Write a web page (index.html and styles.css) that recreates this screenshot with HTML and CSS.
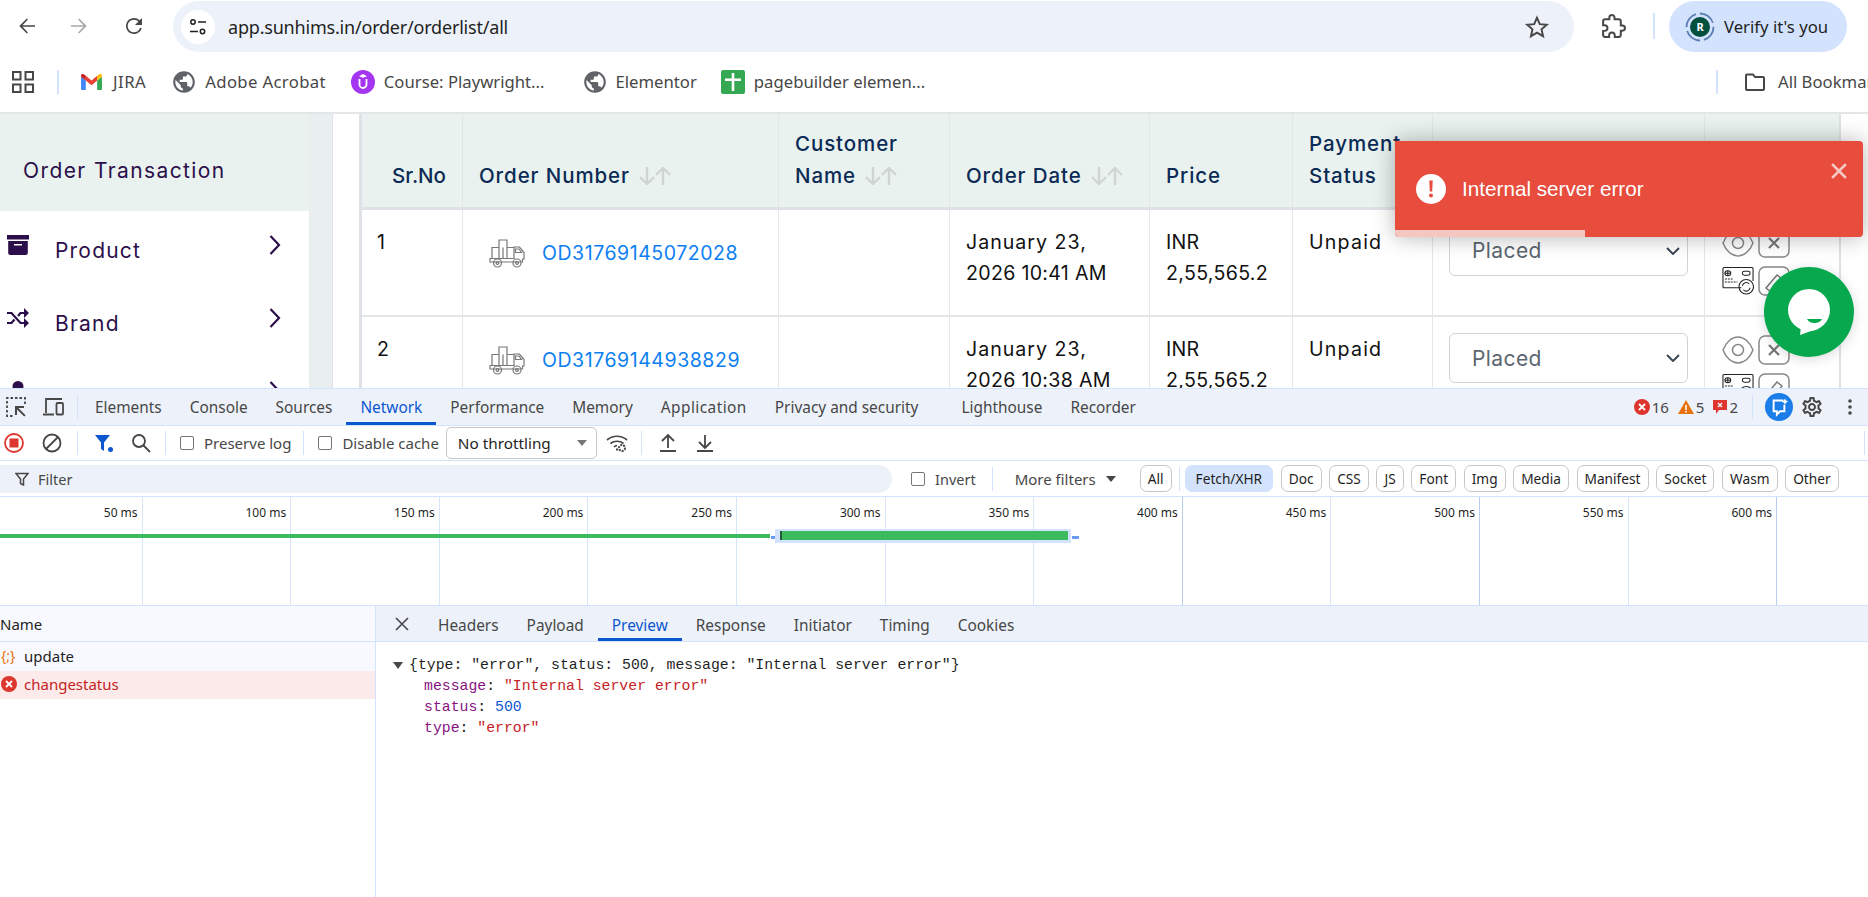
FILE: index.html
```html
<!DOCTYPE html>
<html lang="en">

<head>
    <meta charset="UTF-8">
    <meta name="viewport" content="width=device-width, initial-scale=1">
    <title>Order list</title>
    <link rel="stylesheet" href="styles.css">
</head>

<body>

    <div class="toolbar">
        <svg class="tb-icon back" viewBox="0 0 24 24"><path fill="#474747" d="M20 11.2H7.5l5.4-5.6L11.8 4.500l-7.500 7.500 7.500 7.500 1.100-1.100-5.400-5.600H20z"/></svg>
        <svg class="tb-icon forward" viewBox="0 0 24 24"><path fill="#a8a8a8" d="M4 11.2h12.500l-5.400-5.600 1.100-1.100 7.500 7.500-7.500 7.500-1.100-1.100 5.400-5.600H4z"/></svg>
        <svg class="tb-icon reload" viewBox="0 0 24 24"><path fill="#474747" d="M17.650 6.350A7.958 7.958 0 0 0 12 4c-4.420 0-7.990 3.580-7.990 8s3.570 8 7.990 8c3.730 0 6.840-2.550 7.730-6h-1.800A6.300 6.300 0 0 1 12 18.300c-3.480 0-6.300-2.820-6.300-6.300S8.520 5.700 12 5.700c1.740 0 3.300.72 4.430 1.870L13 11h7V4z"/></svg>
        <div class="omnibox">
            <span class="site-info">
                <svg viewBox="0 0 20 20" width="20" height="20"><g fill="none" stroke="#1f1f1f" stroke-width="1.500"><circle cx="5" cy="5" r="2.200"/><path d="M10 5h8M2 14.500h8"/><circle cx="14.500" cy="14.500" r="2.200"/></g></svg>
            </span>
            <span class="url">app.sunhims.in/order/orderlist/all</span>
            <svg class="star" viewBox="0 0 24 24"><path fill="none" stroke="#474747" stroke-width="1.800" d="M12 3.500l2.600 5.900 6.400.6-4.800 4.200 1.400 6.300L12 17.200l-5.600 3.300 1.400-6.300L3 10l6.400-.6z"/></svg>
        </div>
        <svg class="tb-icon puzzle" viewBox="0 0 24 24"><path fill="none" stroke="#474747" stroke-width="1.900" d="M20.500 11H19V7c0-1.100-.9-2-2-2h-4V3.500C13 2.120 11.880 1 10.500 1S8 2.120 8 3.500V5H4c-1.100 0-1.990.9-1.990 2v3.800H3.500c1.490 0 2.700 1.210 2.700 2.700s-1.210 2.700-2.700 2.700H2V20c0 1.100.9 2 2 2h3.800v-1.500c0-1.490 1.210-2.700 2.700-2.700 1.490 0 2.700 1.210 2.700 2.700V22H17c1.100 0 2-.9 2-2v-4h1.500c1.380 0 2.500-1.120 2.500-2.500S21.880 11 20.500 11z"/></svg>
        <span class="tb-sep"></span>
        <div class="profile-pill">
            <svg class="avatar" viewBox="0 0 30 30" width="30" height="30">
                <circle cx="15" cy="15" r="13.500" fill="none" stroke="#5b7db1" stroke-width="1.800" stroke-dasharray="17 4"/>
                <circle cx="15" cy="15" r="10" fill="#04503f"/>
                <text x="15" y="19" text-anchor="middle" class="avatar-letter">R</text>
            </svg>
            <span>Verify it's you</span>
        </div>
    </div>

    <div class="bookmarks">
        <svg class="apps" viewBox="0 0 22 22" width="22" height="22"><g fill="none" stroke="#474747" stroke-width="2"><rect x="1" y="1" width="7.500" height="7.500"/><rect x="13.500" y="1" width="7.500" height="7.500"/><rect x="1" y="13.500" width="7.500" height="7.500"/><rect x="13.500" y="13.500" width="7.500" height="7.500"/></g></svg>
        <span class="bm-sep"></span>
        <div class="bm bm-jira">
            <svg viewBox="0 0 24 20" width="23" height="19"><path fill="#4285f4" d="M1 5v13a1 1 0 0 0 1 1h4V9z"/><path fill="#34a853" d="M18 9v10h4a1 1 0 0 0 1-1V5z"/><path fill="#ea4335" d="M6 9v-5L12 9l6-5v5l-6 5z"/><path fill="#c5221f" d="M1 3.500V5l5 4V4L4.500 2.800C3 1.600 1 2.500 1 3.500z"/><path fill="#fbbc04" d="M23 3.500V5l-5 4V4l1.500-1.200C21 1.600 23 2.500 23 3.500z"/></svg>
            <span>JIRA</span>
        </div>
        <div class="bm bm-adobe">
            <svg viewBox="0 0 24 24" width="26" height="26"><path fill="#5f6368" d="M12 2C6.480 2 2 6.480 2 12s4.480 10 10 10 10-4.480 10-10S17.520 2 12 2zm-1 17.930c-3.950-.49-7-3.850-7-7.930 0-.62.08-1.210.21-1.790L9 15v1c0 1.100.9 2 2 2v1.930zm6.900-2.540c-.26-.81-1-1.390-1.900-1.390h-1v-3c0-.55-.45-1-1-1H8v-2h2c.55 0 1-.45 1-1V7h2c1.100 0 2-.9 2-2v-.41c2.930 1.190 5 4.060 5 7.410 0 2.080-.8 3.970-2.100 5.390z"/></svg>
            <span>Adobe Acrobat</span>
        </div>
        <div class="bm bm-course">
            <svg viewBox="0 0 24 24" width="24" height="24"><circle cx="12" cy="12" r="12" fill="#a435f0"/><path fill="none" stroke="#fff" stroke-width="1.800" d="M8.500 9v5.500a3.500 3.500 0 0 0 7 0V9"/><path fill="#fff" d="M12 4l4 2.200-4 1.600-4-1.600z"/></svg>
            <span>Course: Playwright...</span>
        </div>
        <div class="bm bm-elementor">
            <svg viewBox="0 0 24 24" width="26" height="26"><path fill="#5f6368" d="M12 2C6.480 2 2 6.480 2 12s4.480 10 10 10 10-4.480 10-10S17.520 2 12 2zm-1 17.930c-3.950-.49-7-3.850-7-7.930 0-.62.08-1.210.21-1.790L9 15v1c0 1.100.9 2 2 2v1.930zm6.900-2.540c-.26-.81-1-1.390-1.900-1.390h-1v-3c0-.55-.45-1-1-1H8v-2h2c.55 0 1-.45 1-1V7h2c1.100 0 2-.9 2-2v-.41c2.930 1.190 5 4.060 5 7.410 0 2.080-.8 3.970-2.100 5.390z"/></svg>
            <span>Elementor</span>
        </div>
        <div class="bm bm-page">
            <svg viewBox="0 0 24 24" width="24" height="24"><rect width="24" height="24" rx="2" fill="#34a853"/><path fill="#fff" d="M10.700 3h2.600v5.500H20V11h-6.700v10h-2.600V11H4V8.500h6.700z"/></svg>
            <span>pagebuilder elemen...</span>
        </div>
        <div class="bm-all">
            <span class="bm-sep"></span>
            <svg viewBox="0 0 24 24" width="26" height="24"><path fill="none" stroke="#474747" stroke-width="2" d="M3 5.500a1 1 0 0 1 1-1h6l2 2.500h8a1 1 0 0 1 1 1V19a1 1 0 0 1-1 1H4a1 1 0 0 1-1-1z"/></svg>
            <span>All Bookmarks</span>
        </div>
    </div>

    <div class="page">
        <aside class="sidebar">
            <div class="side-head">Order Transaction</div>
            <div class="side-item">
                <svg class="side-icon" viewBox="0 0 22 20"><path fill="#2c0f4a" d="M0 0h22v4.500H0zM1.200 6h19.600v12a2 2 0 0 1-2 2H3.200a2 2 0 0 1-2-2zM7 9v1.600h8V9z" fill-rule="evenodd"/></svg>
                <span class="side-label">Product</span>
                <svg class="side-chev" viewBox="0 0 12 20"><path fill="none" stroke="#2c0f4a" stroke-width="2.200" d="M1.500 1l8.500 9-8.500 9"/></svg>
            </div>
            <div class="side-item">
                <svg class="side-icon" viewBox="0 0 22 20"><g fill="none" stroke="#2c0f4a" stroke-width="2.200"><path d="M0 5h4.500l9 10H18"/><path d="M0 15h4.500l3-3.500M11 8l2.500-3H18"/></g><path fill="#2c0f4a" d="M17 0l5 5-5 5zM17 10l5 5-5 5z"/></svg>
                <span class="side-label">Brand</span>
                <svg class="side-chev" viewBox="0 0 12 20"><path fill="none" stroke="#2c0f4a" stroke-width="2.200" d="M1.500 1l8.500 9-8.500 9"/></svg>
            </div>
            <div class="side-item">
                <svg class="side-icon" viewBox="0 0 22 20"><circle cx="11" cy="5.500" r="5.500" fill="#2c0f4a"/></svg>
                <span class="side-label"></span>
                <svg class="side-chev" viewBox="0 0 12 20"><path fill="none" stroke="#2c0f4a" stroke-width="2.200" d="M1.500 1l8.500 9-8.500 9"/></svg>
            </div>
        </aside>
        <div class="side-gutter"></div>

        <table class="orders">
            <colgroup>
                <col class="c-sr"><col class="c-num"><col class="c-cust"><col class="c-date"><col class="c-price"><col class="c-pay"><col class="c-status"><col class="c-act">
            </colgroup>
            <thead>
                <tr>
                    <th class="th-sr">Sr.No</th>
                    <th>Order Number <svg class="sort" viewBox="0 0 32 18"><path d="M8 0v16M1 10l7 7 7-7"/><path d="M24 18V2M17 8l7-7 7 7"/></svg></th>
                    <th>Customer<br>Name <svg class="sort" viewBox="0 0 32 18"><path d="M8 0v16M1 10l7 7 7-7"/><path d="M24 18V2M17 8l7-7 7 7"/></svg></th>
                    <th>Order Date <svg class="sort" viewBox="0 0 32 18"><path d="M8 0v16M1 10l7 7 7-7"/><path d="M24 18V2M17 8l7-7 7 7"/></svg></th>
                    <th>Price</th>
                    <th>Payment<br>Status</th>
                    <th></th>
                    <th></th>
                </tr>
            </thead>
            <tbody>
                <tr class="row-one">
                    <td>1</td>
                    <td>
                        <div class="order-no">
                            <svg class="truck" viewBox="0 0 36 29"><g fill="none" stroke="#777" stroke-width="1.200"><path d="M1 19.500h24V8h5.500l4.500 5.500v6.500h-1.500v3H1z"/><path d="M3 19.500V8.500h7V1h8v7.500h7M10 8.500v11M18 8.500v11M14 8.500v11"/><path d="M26.500 10h3.500l2.500 3.500h-6z"/><circle cx="8.500" cy="24" r="4"/><circle cx="8.500" cy="24" r="1.400"/><circle cx="28" cy="24" r="4"/><circle cx="28" cy="24" r="1.400"/></g></svg>
                            <a class="order-link">OD31769145072028</a>
                        </div>
                    </td>
                    <td></td>
                    <td><span class="date-top">January 23,</span><br>2026 10:41 AM</td>
                    <td>INR<br>2,55,565.2</td>
                    <td class="unpaid">Unpaid</td>
                    <td>
                        <div class="status-select"><span>Placed</span><svg viewBox="0 0 14 8" width="14" height="8"><path fill="none" stroke="#3f4a57" stroke-width="2" d="M1 1l6 6 6-6"/></svg></div>
                    </td>
                    <td>
                        <div class="actions">
                            <svg class="act" viewBox="0 0 32 30"><g fill="none" stroke="#888" stroke-width="1.500"><path d="M1 15C4 7 10 2 16 2s12 5 15 13c-3 8-9 13-15 13S4 23 1 15z"/><circle cx="16" cy="15" r="5.500"/></g></svg>
                            <svg class="act" viewBox="0 0 32 30"><rect x="1" y="1" width="30" height="28" rx="6" fill="none" stroke="#888" stroke-width="1.500"/><path fill="none" stroke="#777" stroke-width="2.200" d="M11 10l10 10M21 10L11 20"/></svg>
                            <svg class="act" viewBox="0 0 33 30"><g fill="none" stroke="#222" stroke-width="1.100"><path d="M20 22H2a1 1 0 0 1-1-1V2a1 1 0 0 1 1-1h29a1 1 0 0 1 1 1v13"/><ellipse cx="6" cy="7" rx="3" ry="2.500"/><path d="M6 4.500v5M3 7h6"/><rect x="21" y="5" width="8" height="4" rx="2"/><path d="M3 13h9M3 16h13" stroke-dasharray="2 1"/><circle cx="25" cy="21" r="7.500"/><path d="M21 20a4 4 0 0 1 7-2M29 22a4 4 0 0 1-7 2"/></g></svg>
                            <svg class="act" viewBox="0 0 32 30"><rect x="1" y="1" width="30" height="28" rx="6" fill="none" stroke="#888" stroke-width="1.500"/><path fill="none" stroke="#777" stroke-width="1.500" d="M8 22l11-13 5 4-11 13z"/></svg>
                        </div>
                    </td>
                </tr>
                <tr class="row-two">
                    <td>2</td>
                    <td>
                        <div class="order-no">
                            <svg class="truck" viewBox="0 0 36 29"><g fill="none" stroke="#777" stroke-width="1.200"><path d="M1 19.500h24V8h5.500l4.500 5.500v6.500h-1.500v3H1z"/><path d="M3 19.500V8.500h7V1h8v7.500h7M10 8.500v11M18 8.500v11M14 8.500v11"/><path d="M26.500 10h3.500l2.500 3.500h-6z"/><circle cx="8.500" cy="24" r="4"/><circle cx="8.500" cy="24" r="1.400"/><circle cx="28" cy="24" r="4"/><circle cx="28" cy="24" r="1.400"/></g></svg>
                            <a class="order-link">OD31769144938829</a>
                        </div>
                    </td>
                    <td></td>
                    <td><span class="date-top">January 23,</span><br>2026 10:38 AM</td>
                    <td>INR<br>2,55,565.2</td>
                    <td class="unpaid">Unpaid</td>
                    <td>
                        <div class="status-select"><span>Placed</span><svg viewBox="0 0 14 8" width="14" height="8"><path fill="none" stroke="#3f4a57" stroke-width="2" d="M1 1l6 6 6-6"/></svg></div>
                    </td>
                    <td>
                        <div class="actions">
                            <svg class="act" viewBox="0 0 32 30"><g fill="none" stroke="#888" stroke-width="1.500"><path d="M1 15C4 7 10 2 16 2s12 5 15 13c-3 8-9 13-15 13S4 23 1 15z"/><circle cx="16" cy="15" r="5.500"/></g></svg>
                            <svg class="act" viewBox="0 0 32 30"><rect x="1" y="1" width="30" height="28" rx="6" fill="none" stroke="#888" stroke-width="1.500"/><path fill="none" stroke="#777" stroke-width="2.200" d="M11 10l10 10M21 10L11 20"/></svg>
                            <svg class="act" viewBox="0 0 33 30"><g fill="none" stroke="#222" stroke-width="1.100"><path d="M20 22H2a1 1 0 0 1-1-1V2a1 1 0 0 1 1-1h29a1 1 0 0 1 1 1v13"/><ellipse cx="6" cy="7" rx="3" ry="2.500"/><path d="M6 4.500v5M3 7h6"/><rect x="21" y="5" width="8" height="4" rx="2"/><path d="M3 13h9M3 16h13" stroke-dasharray="2 1"/><circle cx="25" cy="21" r="7.500"/><path d="M21 20a4 4 0 0 1 7-2M29 22a4 4 0 0 1-7 2"/></g></svg>
                            <svg class="act" viewBox="0 0 32 30"><rect x="1" y="1" width="30" height="28" rx="6" fill="none" stroke="#888" stroke-width="1.500"/><path fill="none" stroke="#777" stroke-width="1.500" d="M8 22l11-13 5 4-11 13z"/></svg>
                        </div>
                    </td>
                </tr>
            </tbody>
        </table>

        <!-- toast and chat button lie over the table -->
        <div class="toast">
            <div class="toast-body">
                <svg viewBox="0 0 30 30" width="30" height="30"><circle cx="15" cy="15" r="15" fill="#fff"/><path fill="#e74c3c" d="M13.300 6.500h3.400l-.5 11h-2.400zM15 19.500a2 2 0 1 1 0 4 2 2 0 0 1 0-4z"/></svg>
                <span>Internal server error</span>
            </div>
            <svg class="toast-close" viewBox="0 0 14 14" width="16" height="16"><path fill="none" stroke="#f7c9c4" stroke-width="2.400" d="M1 1l12 12M13 1L1 13"/></svg>
            <div class="toast-progress"></div>
        </div>
        <svg class="chat-btn" viewBox="0 0 90 90" width="90" height="90">
            <circle cx="45" cy="45" r="45" fill="#08a84e"/>
            <circle cx="45" cy="43" r="21" fill="#fff"/>
            <path fill="#fff" d="M37 60l-1 8 14-5z"/>
            <path fill="#08a84e" d="M43 52h15a8 6 0 0 1-15 0z"/>
        </svg>
    </div>

    <div class="devtools">
        <div class="dt-tabs">
            <svg class="dt-ico inspect" viewBox="0 0 22 22"><path fill="none" stroke="#474747" stroke-width="1.800" stroke-dasharray="2.500 2" d="M20 8V2H2v18h6"/><path fill="#474747" d="M10 10h9v2h-5.600l7.200 7.200-1.400 1.400-7.200-7.200V19h-2z"/></svg>
            <svg class="dt-ico device" viewBox="0 0 22 22"><path fill="none" stroke="#474747" stroke-width="1.800" d="M4 17V3h16M1 18.500h11"/><rect x="14.500" y="7" width="6.500" height="11.500" rx="1" fill="none" stroke="#474747" stroke-width="1.800"/></svg>
            <span class="dt-sep tab-sep"></span>
            <span class="tab tab-first">Elements</span>
            <span class="tab">Console</span>
            <span class="tab">Sources</span>
            <span class="tab tab-on">Network</span>
            <span class="tab">Performance</span>
            <span class="tab">Memory</span>
            <span class="tab tab-app">Application</span>
            <span class="tab">Privacy and security</span>
            <span class="tab tab-wide">Lighthouse</span>
            <span class="tab">Recorder</span>
            <div class="dt-right">
                <svg viewBox="0 0 16 16" width="16" height="16"><circle cx="8" cy="8" r="8" fill="#dc362e"/><path fill="none" stroke="#fff" stroke-width="1.800" d="M5 5l6 6M11 5l-6 6"/></svg>
                <span class="count">16</span>
                <svg viewBox="0 0 16 16" width="16" height="16"><path fill="#e8710a" d="M8 1l8 14H0z"/><path fill="#fff" d="M7.200 6h1.600v5H7.200zM7.200 12h1.600v1.500H7.200z"/></svg>
                <span class="count">5</span>
                <svg viewBox="0 0 14 16" width="14" height="16"><path fill="#dc362e" d="M0 1h14v10H6l-3 4v-4H0z"/><path fill="none" stroke="#fff" stroke-width="1.300" d="M5 4l4 4M9 4L5 8"/></svg>
                <span class="count">2</span>
                <span class="dt-sep right-sep"></span>
                <svg class="blue-btn" viewBox="0 0 26 26" width="28" height="28"><circle cx="13" cy="13" r="13" fill="#1a7de8"/><path fill="none" stroke="#fff" stroke-width="1.800" d="M17 7H8v10h3v3l3-3h4v-6"/><path fill="#fff" d="M18.500 5l1 2 2 1-2 1-1 2-1-2-2-1 2-1z"/></svg>
                <svg class="gear" viewBox="0 0 24 24" width="24" height="24"><path fill="#474747" d="M19.430 12.980c.04-.32.07-.64.07-.98 0-.34-.03-.66-.07-.98l2.110-1.650c.19-.15.24-.42.12-.64l-2-3.460a.5.5 0 0 0-.61-.22l-2.490 1c-.52-.4-1.080-.73-1.690-.98l-.38-2.650A.488.488 0 0 0 14 2h-4c-.25 0-.46.18-.49.42l-.38 2.650c-.61.25-1.170.59-1.690.98l-2.490-1a.566.566 0 0 0-.18-.03c-.17 0-.34.09-.43.25l-2 3.460c-.13.22-.07.49.12.64l2.110 1.650c-.04.32-.07.65-.07.98 0 .33.03.66.07.98l-2.110 1.650c-.19.15-.24.42-.12.64l2 3.460a.5.5 0 0 0 .61.22l2.490-1c.52.4 1.080.73 1.690.98l.38 2.650c.03.24.24.42.49.42h4c.25 0 .46-.18.49-.42l.38-2.650c.61-.25 1.170-.59 1.690-.98l2.490 1c.06.02.12.03.18.03.17 0 .34-.09.43-.25l2-3.460c.12-.22.07-.49-.12-.64l-2.110-1.650zm-1.980-1.710c.04.31.05.52.05.73 0 .21-.02.43-.05.73l-.14 1.130.89.7 1.080.84-.7 1.210-1.270-.51-1.040-.42-.9.68c-.43.32-.84.56-1.250.73l-1.060.43-.16 1.130-.2 1.350h-1.400l-.19-1.350-.16-1.130-1.060-.43c-.43-.18-.83-.41-1.230-.71l-.91-.7-1.060.43-1.270.51-.7-1.210 1.080-.84.89-.7-.14-1.130c-.03-.31-.05-.54-.05-.74s.02-.43.05-.73l.14-1.130-.89-.7-1.080-.84.7-1.210 1.270.51 1.040.42.9-.68c.43-.32.84-.56 1.250-.73l1.060-.43.16-1.130.2-1.350h1.390l.19 1.350.16 1.130 1.060.43c.43.18.83.41 1.230.71l.91.7 1.060-.43 1.270-.51.7 1.210-1.070.85-.89.7.14 1.130zM12 8c-2.210 0-4 1.790-4 4s1.790 4 4 4 4-1.790 4-4-1.790-4-4-4zm0 6c-1.100 0-2-.9-2-2s.9-2 2-2 2 .9 2 2-.9 2-2 2z"/></svg>
                <svg class="kebab" viewBox="0 0 4 16" width="4" height="16"><circle cx="2" cy="2" r="1.800" fill="#474747"/><circle cx="2" cy="8" r="1.800" fill="#474747"/><circle cx="2" cy="14" r="1.800" fill="#474747"/></svg>
            </div>
        </div>

        <div class="dt-bar">
            <svg class="bar-rec" viewBox="0 0 20 20" width="20" height="20"><circle cx="10" cy="10" r="9" fill="none" stroke="#dc362e" stroke-width="1.800"/><rect x="5.500" y="5.500" width="9" height="9" fill="#dc362e"/></svg>
            <svg class="bar-clear" viewBox="0 0 20 20" width="20" height="20"><g fill="none" stroke="#474747" stroke-width="1.800"><circle cx="10" cy="10" r="8.500"/><path d="M4 16L16 4"/></g></svg>
            <span class="dt-sep s1"></span>
            <svg class="bar-filter" viewBox="0 0 20 20" width="20" height="20"><path fill="#0b57d0" d="M1 2h15l-6 7.500V18l-3-2V9.500z"/><circle cx="16.500" cy="16.500" r="2.500" fill="#0b57d0"/></svg>
            <svg class="bar-search" viewBox="0 0 20 20" width="20" height="20"><g fill="none" stroke="#474747" stroke-width="1.800"><circle cx="8" cy="8" r="6"/><path d="M12.500 12.500L19 19"/></g></svg>
            <span class="dt-sep s2"></span>
            <label class="check c1"><span class="box"></span>Preserve log</label>
            <span class="dt-sep s3"></span>
            <label class="check c2"><span class="box"></span>Disable cache</label>
            <div class="throttle"><span>No throttling</span><i class="caret"></i></div>
            <svg class="bar-wifi" viewBox="0 0 22 20" width="22" height="20"><g fill="none" stroke="#474747" stroke-width="1.700"><path d="M1 7c5.500-5 14.500-5 20 0M4.500 10.500c3.500-3 9.500-3 13 0M8 14c1-1 2-1.300 3-1.300"/></g><circle cx="16" cy="15" r="3" fill="none" stroke="#474747" stroke-width="2" stroke-dasharray="2 1"/><path fill="#474747" d="M10 15.500h2v2h-2z"/></svg>
            <span class="dt-sep s4"></span>
            <svg class="bar-up" viewBox="0 0 20 20" width="20" height="20"><path fill="none" stroke="#474747" stroke-width="1.800" d="M10 15V2M4 8l6-6 6 6M2 18h16"/></svg>
            <svg class="bar-down" viewBox="0 0 20 20" width="20" height="20"><path fill="none" stroke="#474747" stroke-width="1.800" d="M10 2v13M4 9l6 6 6-6M2 18h16"/></svg>
            <span class="dt-sep s7"></span>
        </div>

        <div class="dt-filter">
            <div class="filter-input">
                <svg viewBox="0 0 14 14" width="14" height="14"><path fill="none" stroke="#474747" stroke-width="1.500" d="M1 1.500h12l-4.500 5.500v6l-3-1.500V7z"/></svg>
                <span>Filter</span>
            </div>
            <label class="check c3"><span class="box"></span>Invert</label>
            <span class="dt-sep s5"></span>
            <span class="more">More filters</span>
            <i class="caret caret-dark"></i>
            <span class="chip chip-all">All</span>
            <span class="dt-sep s6"></span>
            <span class="chip chip-on">Fetch/XHR</span>
            <span class="chip">Doc</span>
            <span class="chip">CSS</span>
            <span class="chip">JS</span>
            <span class="chip">Font</span>
            <span class="chip">Img</span>
            <span class="chip">Media</span>
            <span class="chip">Manifest</span>
            <span class="chip">Socket</span>
            <span class="chip">Wasm</span>
            <span class="chip">Other</span>
        </div>

        <div class="overview">
            <div class="tick tick-first">50 ms</div>
            <div class="tick">100 ms</div>
            <div class="tick">150 ms</div>
            <div class="tick">200 ms</div>
            <div class="tick">250 ms</div>
            <div class="tick">300 ms</div>
            <div class="tick">350 ms</div>
            <div class="tick tick-dark">400 ms</div>
            <div class="tick">450 ms</div>
            <div class="tick tick-dark">500 ms</div>
            <div class="tick">550 ms</div>
            <div class="tick tick-dark">600 ms</div>
            <!-- waterfall bars sit on top of the grid -->
            <div class="wait-bar"></div>
            <div class="dot dot-a"></div>
            <div class="sel-box"><div class="recv-bar"></div></div>
            <div class="dot dot-b"></div>
        </div>

        <div class="net">
            <div class="names">
                <div class="names-head">Name</div>
                <div class="name-row"><span class="json-ico">{;}</span>update</div>
                <div class="name-row name-err">
                    <svg viewBox="0 0 16 16" width="16" height="16"><circle cx="8" cy="8" r="8" fill="#dc362e"/><path fill="none" stroke="#fff" stroke-width="1.800" d="M5 5l6 6M11 5l-6 6"/></svg>
                    changestatus
                </div>
            </div>
            <div class="detail">
                <div class="detail-tabs">
                    <svg class="detail-x" viewBox="0 0 14 14" width="14" height="14"><path fill="none" stroke="#474747" stroke-width="1.600" d="M1 1l12 12M13 1L1 13"/></svg>
                    <span class="tab">Headers</span>
                    <span class="tab">Payload</span>
                    <span class="tab tab-on">Preview</span>
                    <span class="tab">Response</span>
                    <span class="tab">Initiator</span>
                    <span class="tab">Timing</span>
                    <span class="tab">Cookies</span>
                </div>
                <div class="json">
                    <div class="json-top"><i class="tri"></i>{type: "error", status: 500, message: "Internal server error"}</div>
                    <div class="json-line"><span class="key">message</span>: <span class="str">"Internal server error"</span></div>
                    <div class="json-line"><span class="key">status</span>: <span class="num">500</span></div>
                    <div class="json-line"><span class="key">type</span>: <span class="str">"error"</span></div>
                </div>
            </div>
        </div>
    </div>

</body>

</html>
```

FILE: styles.css
```css
* {
    box-sizing: border-box;
}

html, body {
    margin: 0;
    width: 1868px;
    height: 897px;
    overflow: hidden;
}

body {
    font-family: "Noto Sans", Arial, sans-serif;
    background: #fff;
    color: #1f1f1f;
}

svg {
    display: block;
    flex: none;
}

/* browser toolbar */

.toolbar {
    display: flex;
    align-items: center;
    height: 52px;
    padding-left: 15px;
}

.tb-icon {
    width: 24px;
    height: 24px;
}

.forward {
    margin-left: 28px;
}

.reload {
    margin-left: 31px;
}

.omnibox {
    display: flex;
    align-items: center;
    width: 1401px;
    height: 51px;
    margin-left: 27px;
    margin-top: 1px;
    padding: 0 24px 0 8px;
    background: #edf2fa;
    border-radius: 26px;
}

.site-info {
    display: flex;
    align-items: center;
    justify-content: center;
    width: 34px;
    height: 34px;
    background: #fff;
    border-radius: 50%;
}

.url {
    margin-left: 13px;
    font-size: 18px;
    letter-spacing: -0.2px;
    color: #1f1f1f;
}

.star {
    width: 26px;
    height: 26px;
    margin-left: auto;
}

.puzzle {
    width: 25px;
    height: 25px;
    margin-left: 27px;
}

.tb-sep {
    width: 2px;
    height: 26px;
    margin-left: 27px;
    background: #d3e3fd;
}

.profile-pill {
    display: flex;
    align-items: center;
    gap: 9px;
    width: 178px;
    height: 51px;
    margin-left: 14px;
    margin-top: 1px;
    padding-left: 16px;
    background: #d3e3fd;
    border-radius: 26px;
    font-size: 16.7px;
    color: #1f1f1f;
}

.avatar-letter {
    font-family: "Noto Sans", sans-serif;
    font-size: 11px;
    font-weight: 700;
    fill: #fff;
}

/* bookmarks */

.bookmarks {
    display: flex;
    align-items: center;
    height: 62px;
    padding-left: 12px;
    padding-bottom: 1px;
    font-size: 16.7px;
    color: #474747;
    white-space: nowrap;
    border-bottom: 2px solid #e3e6e6;
}

.bm-sep {
    flex: none;
    width: 2px;
    height: 24px;
    background: #d3e3fd;
}

.bookmarks > .bm-sep {
    margin-left: 23px;
}

.bm {
    display: flex;
    align-items: center;
    gap: 10px;
}

.bm-jira {
    margin-left: 21px;
    letter-spacing: 0.5px;
}

.bm-adobe {
    margin-left: 25px;
    gap: 8px;
    letter-spacing: 0.35px;
}

.bm-course {
    margin-left: 25px;
    gap: 9px;
}

.bm-elementor {
    margin-left: 37px;
    gap: 8px;
}

.bm-page {
    margin-left: 24px;
    gap: 9px;
}

.bm-all {
    display: flex;
    align-items: center;
    width: 152px;
    margin-left: auto;
    overflow: hidden;
}

.bm-all svg {
    margin-left: 24px;
}

.bm-all span:last-child {
    margin-left: 10px;
}

/* shop page */

.page {
    position: relative;
    display: flex;
    height: 274px;
    overflow: hidden;
    font-family: Inter, "Noto Sans", sans-serif;
}

.sidebar {
    width: 309px;
    flex: none;
}

.side-head {
    display: flex;
    align-items: center;
    height: 97px;
    padding-left: 23px;
    padding-top: 15px;
    background: #e9f2ee;
    font-size: 21px;
    letter-spacing: 1.4px;
    color: #2c0f4a;
}

.side-item {
    position: relative;
    display: flex;
    height: 73px;
    padding: 24px 28px 0 7px;
    color: #2c0f4a;
}

.side-icon {
    width: 22px;
    height: 20px;
}

.side-label {
    margin-left: 26px;
    margin-top: 3px;
    font-size: 21px;
    letter-spacing: 1.2px;
}

.side-chev {
    width: 12px;
    height: 20px;
    margin-left: auto;
}

.side-gutter {
    flex: none;
    width: 24px;
    margin-right: 26px;
    background: #e9eeef;
    border-right: 1px solid #dfe3e6;
}

.orders {
    width: 1480px;
    height: 274px;
    border-collapse: collapse;
    table-layout: fixed;
    border-left: 3px solid #dee2e6;
    font-size: 19.6px;
    line-height: 31px;
    align-self: flex-start;
}

.c-sr { width: 102px; }
.c-num { width: 316px; }
.c-cust { width: 171px; }
.c-date { width: 200px; }
.c-price { width: 143px; }
.c-pay { width: 140px; }
.c-status { width: 272px; }
.c-act { width: 135px; }

.orders th {
    height: 94px;
    padding: 0 16px 14px;
    background: #e9f2ee;
    border-right: 1px solid #dfe6e4;
    border-bottom: 3px solid #dee2e6;
    vertical-align: bottom;
    text-align: left;
    font-weight: 500;
    font-size: 20.5px;
    line-height: 32.500px;
    letter-spacing: 0.9px;
    color: #0b2a55;
    white-space: nowrap;
}

.orders th.th-sr {
    padding-left: 30px;
    letter-spacing: 0;
}

.orders th:last-child {
    border-right: 2px solid #dee2e6;
}

.sort {
    display: inline-block;
    width: 32px;
    height: 18px;
    vertical-align: -2px;
    margin-left: 3px;
    fill: none;
    stroke: #d0d4d4;
    stroke-width: 2.400;
}

.orders td {
    padding: 17px 16px 0;
    border-right: 1px solid #e4e7ea;
    border-bottom: 2px solid #e4e7ea;
    vertical-align: top;
    color: #111;
    letter-spacing: 0.3px;
}

.orders td:first-child {
    padding-left: 15px;
}

.orders td.unpaid {
    letter-spacing: 1.2px;
}

.date-top {
    letter-spacing: 1px;
}

.row-one td {
    height: 108px;
}

.row-two td {
    height: 72px;
}

.order-no {
    display: flex;
    align-items: center;
    gap: 17px;
    padding-left: 10px;
    padding-top: 11px;
}

.truck {
    width: 36px;
    height: 29px;
}

.order-link {
    color: #0d7ff2;
    letter-spacing: 0.55px;
    font-size: 19.5px;
}

.status-select {
    display: flex;
    align-items: center;
    justify-content: space-between;
    width: 239px;
    height: 50px;
    margin-top: -1px;
    padding: 0 7px 0 22px;
    border: 1px solid #ced4da;
    border-radius: 6px;
    color: #5c6670;
    font-size: 21px;
    letter-spacing: 0.4px;
    background: #fff;
}

.actions {
    display: grid;
    grid-template-columns: 32px 32px;
    column-gap: 4px;
    row-gap: 8px;
    margin-top: 3px;
}

.orders td:last-child {
    padding-left: 17px;
    padding-top: 15px;
    border-right: 2px solid #dee2e6;
}

.act {
    width: 32px;
    height: 30px;
}

/* things lying over the table */

.toast {
    position: absolute;
    left: 1395px;
    top: 27px;
    width: 468px;
    height: 96px;
    background: #e74c3c;
    border-radius: 0 4px 4px 4px;
    box-shadow: 0 0 22px rgba(0, 0, 0, 0.3);
    color: #fff;
    overflow: hidden;
}

.toast-body {
    display: flex;
    align-items: center;
    gap: 16px;
    height: 96px;
    padding: 0 0 0 21px;
    font-family: "Liberation Sans", Arial, sans-serif;
    font-size: 20.7px;
}

.toast-close {
    position: absolute;
    right: 16px;
    top: 22px;
}

.toast-progress {
    position: absolute;
    left: 0;
    bottom: 0;
    width: 190px;
    height: 7px;
    background: #f6c6c0;
}

.chat-btn {
    position: absolute;
    left: 1764px;
    top: 153px;
    filter: drop-shadow(0 2px 6px rgba(0, 0, 0, 0.15));
}

/* devtools */

.devtools {
    height: 509px;
    border-top: 1px solid #d3e3fd;
    font-size: 14px;
    color: #474747;
}

.dt-tabs {
    display: flex;
    align-items: stretch;
    height: 37px;
    padding-left: 5px;
    background: #edf2fa;
    border-bottom: 1px solid #d3e3fd;
}

.dt-ico {
    width: 22px;
    height: 22px;
    align-self: center;
}

.device {
    margin-left: 15px;
}

.dt-sep {
    flex: none;
    width: 1px;
    height: 24px;
    background: #d3e3fd;
    align-self: center;
}

.tab-sep {
    margin-left: 13px;
}

.tab {
    display: flex;
    align-items: center;
    padding: 1px 14px 0;
    font-size: 15.4px;
    white-space: nowrap;
    border-bottom: 3px solid transparent;
    border-top: 3px solid transparent;
}

.tab-first {
    margin-left: 3px;
}

.tab-app {
    letter-spacing: 0.45px;
}

.tab-wide {
    margin-left: 15px;
}

.tab-on {
    color: #0b57d0;
    border-bottom-color: #0b57d0;
}

.dt-right {
    display: flex;
    align-items: center;
    margin-left: auto;
    padding-right: 16px;
}

.count {
    margin: 0 9px 0 2px;
    font-size: 15px;
}

.right-sep {
    margin: 0 12px 0 5px;
}

.blue-btn {
    margin-right: 7px;
}

.kebab {
    margin-left: 24px;
}

.dt-bar {
    display: flex;
    align-items: center;
    height: 35px;
    padding-left: 4px;
    background: #fff;
    border-bottom: 1px solid #d3e3fd;
}

.bar-clear {
    margin-left: 18px;
}

.dt-bar .s1 {
    margin-left: 15px;
}

.bar-filter {
    margin-left: 16px;
}

.bar-search {
    margin-left: 17px;
}

.dt-bar .s2 {
    margin-left: 14px;
}

.dt-bar .s7 {
    margin-left: auto;
    margin-right: 3px;
}

.check {
    display: flex;
    align-items: center;
    gap: 10px;
    font-size: 15px;
    white-space: nowrap;
}

.box {
    width: 14px;
    height: 14px;
    border: 1px solid #747775;
    border-radius: 2px;
    background: #fff;
}

.c1 {
    margin-left: 14px;
}

.dt-bar .s3 {
    margin-left: 12px;
}

.c2 {
    margin-left: 14px;
}

.throttle {
    display: flex;
    align-items: center;
    justify-content: space-between;
    width: 151px;
    height: 32px;
    margin-left: 7px;
    padding: 0 9px 0 11px;
    border: 1px solid #c7c7c7;
    border-radius: 5px;
    color: #1f1f1f;
    font-size: 15.3px;
}

.caret {
    width: 0;
    height: 0;
    border-left: 5px solid transparent;
    border-right: 5px solid transparent;
    border-top: 6px solid #747775;
}

.caret-dark {
    margin-left: 10px;
    border-top-color: #474747;
}

.bar-wifi {
    margin-left: 9px;
}

.dt-bar .s4 {
    margin-left: 13px;
}

.bar-up {
    margin-left: 16px;
}

.bar-down {
    margin-left: 17px;
}

.dt-filter {
    display: flex;
    align-items: center;
    height: 36px;
    border-bottom: 1px solid #d3e3fd;
    background: #fff;
}

.filter-input {
    display: flex;
    align-items: center;
    gap: 9px;
    width: 892px;
    height: 28px;
    padding-left: 15px;
    background: #edf2fa;
    border-radius: 0 14px 14px 0;
    font-size: 14.5px;
}

.c3 {
    margin-left: 19px;
    font-size: 14.5px;
}

.dt-filter .s5 {
    margin-left: 16px;
}

.more {
    margin-left: 22px;
    font-size: 15px;
}

.chip {
    display: flex;
    align-items: center;
    height: 27px;
    padding: 0 7px;
    margin-left: 7.600px;
    border: 1px solid #c7c7c7;
    border-radius: 7px;
    font-size: 13.7px;
    color: #1f1f1f;
}

.chip-all {
    margin-left: 24px;
}

.dt-filter .s6 {
    margin-left: 7px;
}

.chip-on {
    margin-left: 5px;
    padding: 0 10px;
    background: #d3e3fd;
    border-color: #d3e3fd;
}

.overview {
    position: relative;
    display: flex;
    height: 109px;
    background: #fff;
    border-bottom: 1px solid #d3e3fd;
}

.tick {
    flex: none;
    width: 148.6px;
    padding: 7px 4px 0 0;
    border-right: 1px solid #d9e5f8;
    text-align: right;
    font-size: 12px;
    color: #1f1f1f;
}

.tick-first {
    width: 142.6px;
}

.tick-dark {
    border-right-color: #b9cdec;
}

.wait-bar {
    position: absolute;
    left: 0;
    top: 37px;
    width: 770px;
    height: 4px;
    background: #3cba5d;
}

.sel-box {
    position: absolute;
    left: 775px;
    top: 32px;
    width: 296px;
    height: 14px;
    padding: 2px 3px 3px 5px;
    background: #d3e3fd;
}

.recv-bar {
    height: 100%;
    background: #3cba5d;
    border-left: 2px solid #1f5c33;
}

.dot {
    position: absolute;
    top: 39px;
    height: 3px;
    background: #6a9df2;
}

.dot-a {
    left: 771px;
    width: 4px;
}

.dot-b {
    left: 1072px;
    width: 7px;
}

.net {
    display: flex;
    height: 292px;
}

.names {
    flex: none;
    width: 376px;
    border-right: 1px solid #d3e3fd;
    font-size: 15px;
    color: #1f1f1f;
}

.names-head {
    display: flex;
    align-items: center;
    height: 36px;
    background: #f8f9fe;
    border-bottom: 1px solid #d3e3fd;
}

.name-row {
    display: flex;
    align-items: center;
    gap: 7px;
    height: 29px;
    background: #f8f9fe;
    padding: 0 0 2px 1px;
}

.json-ico {
    flex: none;
    width: 16px;
    color: #e8710a;
    font-size: 14px;
    white-space: nowrap;
}

.name-err {
    height: 28px;
    background: #fcebea;
    color: #c5221f;
}

.detail {
    flex: 1;
}

.detail-tabs {
    display: flex;
    align-items: stretch;
    height: 36px;
    background: #edf2fa;
    border-bottom: 1px solid #d3e3fd;
}

.detail-tabs .tab {
    padding-top: 3px;
}

.detail-x {
    align-self: center;
    margin-left: 19px;
    margin-right: 15px;
}

.json {
    padding: 13px 0 0 17px;
    font-family: "Liberation Mono", monospace;
    font-size: 14.8px;
    line-height: 21px;
    color: #1f1f1f;
}

.json-top {
    display: flex;
    align-items: center;
    white-space: pre;
}

.tri {
    width: 0;
    height: 0;
    margin-right: 6px;
    border-left: 5px solid transparent;
    border-right: 5px solid transparent;
    border-top: 7px solid #474747;
}

.json-line {
    padding-left: 31px;
}

.key {
    color: #881280;
}

.str {
    color: #c5221f;
}

.num {
    color: #0b57d0;
}
```
